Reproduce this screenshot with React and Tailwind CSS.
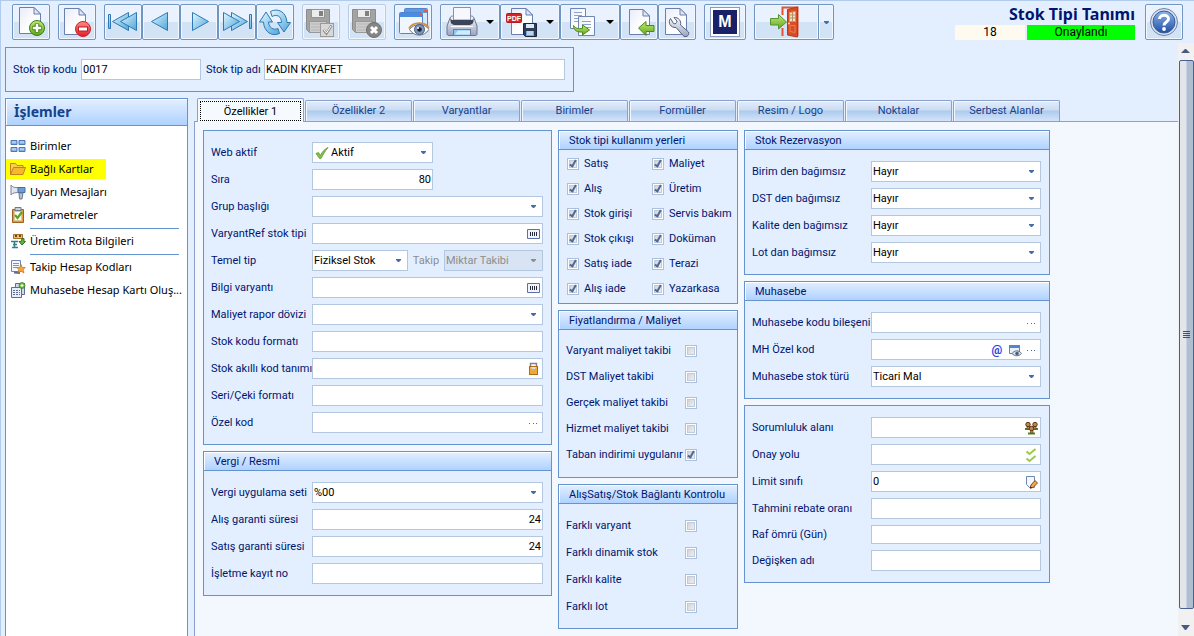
import clsx from "clsx";

/* ---------- toolbar icons ---------- */

function Page({ x = 0, y = 0, w = 22, h = 28 }) {
  return (
    <g transform={`translate(${x} ${y})`}>
      <path
        d={`M.5 .5H${w - 7}L${w - 0.5} 7V${h - 0.5}H.5Z`}
        fill="url(#paper)"
        stroke="#6a7fae"
      />
      <path d={`M${w - 7} .5V7H${w - 0.5}Z`} fill="#dfe6f6" stroke="#6a7fae" />
    </g>
  );
}

function Defs() {
  return (
    <svg width="0" height="0" className="absolute" aria-hidden="true">
      <defs>
        <linearGradient id="paper" x1="0" y1="0" x2="1" y2="1">
          <stop offset="0" stopColor="#e9ecf8" />
          <stop offset=".6" stopColor="#ffffff" />
          <stop offset="1" stopColor="#f0f3fc" />
        </linearGradient>
        <linearGradient id="aqua" x1="0" y1="0" x2="1" y2="1">
          <stop offset="0" stopColor="#e2f8ff" />
          <stop offset="1" stopColor="#4fa5da" />
        </linearGradient>
        <linearGradient id="lime" x1="0" y1="0" x2="0" y2="1">
          <stop offset="0" stopColor="#c2ec70" />
          <stop offset="1" stopColor="#5fa61e" />
        </linearGradient>
        <linearGradient id="steel" x1="0" y1="0" x2="0" y2="1">
          <stop offset="0" stopColor="#fafbfe" />
          <stop offset="1" stopColor="#98a3be" />
        </linearGradient>
        <linearGradient id="red" x1="0" y1="0" x2="0" y2="1">
          <stop offset="0" stopColor="#ff8c86" />
          <stop offset="1" stopColor="#e01c26" />
        </linearGradient>
        <linearGradient id="blue" x1="0" y1="0" x2="0" y2="1">
          <stop offset="0" stopColor="#8db4ea" />
          <stop offset="1" stopColor="#1f4fa5" />
        </linearGradient>
      </defs>
    </svg>
  );
}

function Icon({ w = 32, children }) {
  return (
    <svg width={w} height="32" viewBox={`0 0 ${w} 32`} aria-hidden="true">
      {children}
    </svg>
  );
}

const NewIcon = () => (
  <Icon>
    <Page x={4} y={1} w={22} h={27} />
    <circle cx="22" cy="22" r="7.5" fill="url(#lime)" stroke="#3f7d12" />
    <path d="M22 17.5v9M17.5 22h9" stroke="#3f7d12" strokeWidth="4.5" />
    <path d="M22 18v8M18 22h8" stroke="#fff" strokeWidth="2.5" />
  </Icon>
);

const DeleteIcon = () => (
  <Icon>
    <Page x={3} y={2} w={22} h={27} />
    <circle cx="22" cy="23" r="7.5" fill="url(#red)" stroke="#c8222c" />
    <rect x="17.5" y="21" width="9" height="4" fill="#fff" stroke="#b81c26" />
  </Icon>
);

const FirstIcon = () => (
  <Icon>
    <g fill="url(#aqua)" stroke="#2f78b4">
      <path d="M1.500 8.500h2v14h-2z" />
      <path d="M21.500 6.500v18L5.500 15.500z" />
      <path d="M29.500 6.500v18L13.500 15.500z" />
    </g>
  </Icon>
);

const PrevIcon = () => (
  <Icon>
    <path d="M22.500 6.500v18L6.500 15.500z" fill="url(#aqua)" stroke="#2f78b4" />
  </Icon>
);

const NextIcon = () => (
  <Icon>
    <path d="M9.500 6.500v18L25.500 15.500z" fill="url(#aqua)" stroke="#2f78b4" />
  </Icon>
);

const LastIcon = () => (
  <Icon>
    <g fill="url(#aqua)" stroke="#2f78b4">
      <path d="M28.500 8.500h2v14h-2z" />
      <path d="M10.500 6.500v18L26.500 15.500z" />
      <path d="M2.500 6.500v18L18.500 15.500z" />
    </g>
  </Icon>
);

const RefreshIcon = () => (
  <Icon>
    <g fill="url(#aqua)" stroke="#2f78b4" strokeLinejoin="round">
      <path d="M11.500 5.500C19 1.500 27.500 6 28 16.500h3.500L25 26l-6.500-9.500H22.500C22.500 10 17.500 8 13 10.500Z" />
      <path d="M20.500 27.500C13 31 5 26 4.500 16H.5L7 6l6.500 10H9.500C10 22 14.500 24.500 19 22.500Z" />
    </g>
  </Icon>
);

function Floppy() {
  return (
    <g>
      <path d="M1.500 3.500h23v23h-20l-3-3z" fill="#a3a3a3" stroke="#8c8c8c" />
      <rect x="6.500" y="3.500" width="13" height="8" fill="#ececec" stroke="#949494" />
      <rect x="14" y="5" width="4" height="5" fill="#808080" />
      <rect x="4.500" y="15.500" width="17" height="11" fill="#cdcdcd" stroke="#989898" />
      <path d="M6 18h14M6 21h14M6 24h14" stroke="#b5b5b5" />
    </g>
  );
}

const SaveIcon = () => (
  <Icon>
    <Floppy />
    <rect x="15.500" y="17.500" width="13" height="13" fill="#d8d8d8" stroke="#9a9a9a" />
    <path d="m18.500 24 3 3.500 5-8" fill="none" stroke="#8d8d8d" strokeWidth="2.500" />
    <path d="m19 24 2.500 3 4.500-7" fill="none" stroke="#fff" />
  </Icon>
);

const SaveCloseIcon = () => (
  <Icon>
    <Floppy />
    <circle cx="23" cy="24" r="7.500" fill="#858585" stroke="#707070" />
    <path d="m20 21 6 6m0-6-6 6" stroke="#fff" strokeWidth="3" />
  </Icon>
);

const PreviewIcon = () => (
  <Icon>
    <rect x="7.500" y="2.500" width="23" height="20" rx="1" fill="#d9e9fb" stroke="#4d86cf" />
    <path d="M8 3h22v4H8z" fill="#5d9ae3" />
    <rect x="2.500" y="6.500" width="23" height="21" rx="1" fill="#f1f6fe" stroke="#4d86cf" />
    <path d="M3 7h22v4H3z" fill="#4b8de0" />
    <path d="M22 8h3v2h-3zM27 4h3v2h-3z" fill="#f0583a" />
    <path d="M12.500 23.500C17 17 28 17 32 23.500 27 31 17 31 12.500 23.500Z" fill="#fff" stroke="#6e7486" />
    <path d="M12 22.500C16 15.500 28 15.500 32 22" fill="none" stroke="#d78b3c" strokeWidth="1.800" />
    <circle cx="22.500" cy="23.500" r="5" fill="#7e96b8" stroke="#4d5f7e" />
    <circle cx="22.500" cy="23.500" r="2.300" fill="#1a2339" />
    <circle cx="21" cy="22" r="1" fill="#fff" />
  </Icon>
);

const PrintIcon = () => (
  <Icon>
    <path d="M4 12c1-2 2-2 4-2h16c2 0 3 0 4 2l3 8v8c0 1-1 1.500-2 1.500H3c-1 0-2-.5-2-1.500v-8Z" fill="url(#steel)" stroke="#6a7590" />
    <path d="M4.500 12c-.5 5 1 7 5 7h13c4 0 5.500-2 5-7-1 2.500-2 3-5 3h-13c-3 0-4-.5-5-3Z" fill="#3b4459" />
    <path d="M7.500 1.500h17v12.500h-17z" fill="#f7f8fd" stroke="#8892ac" />
    <path d="M6 14h20v3H6z" fill="#3b4459" />
    <path d="M5 20.500h22" stroke="#fff" />
    <rect x="7.500" y="23.500" width="17" height="6" fill="#8cc9f8" stroke="#6d7c9a" />
    <path d="M12 24.500h12v4H9z" fill="#d0ebff" />
  </Icon>
);

const PdfIcon = () => (
  <Icon>
    <Page x={5} y={2} w={22} h={27} />
    <rect x=".5" y="7.500" width="15" height="9" rx="1" fill="#d8232b" stroke="#b5161e" />
    <text x="8" y="15" textAnchor="middle" fontFamily="Liberation Sans" fontWeight="700" fontSize="7" fill="#fff">
      PDF
    </text>
    <path d="M17.500 17.500h13v13h-11l-2-2z" fill="#2f3c55" stroke="#1c263b" />
    <rect x="20" y="18" width="8" height="4" fill="#dce8f6" />
    <rect x="20" y="25" width="8" height="5" fill="#74a9e6" />
    <path d="M21 26h6M21 28h6" stroke="#fff" />
  </Icon>
);

const CopyIcon = () => (
  <Icon>
    <g stroke="#6f85b3" fill="url(#paper)">
      <path d="M4.500 2.500h15v20h-15z" />
      <path d="M12.500 10.500h16v19h-16z" />
    </g>
    <path d="M8 6.500h8M8 9.500h8M8 12.500h4M8 15.500h4M16 15.500h9M16 18.500h9M20 21.500h5" stroke="#8da3cc" />
    <path d="M7.500 19.500c2 3 5 3.500 9 3v-3.500l7 5-7 5v-3c-5 .5-9-1.500-9-6.500Z" fill="url(#lime)" stroke="#4a8a17" />
  </Icon>
);

const ImportIcon = () => (
  <Icon>
    <Page x={6} y={3} w={21} h={26} />
    <path d="m15.500 22 7.500-6.500v4h8v6h-8v4z" fill="url(#lime)" stroke="#4a8a17" />
  </Icon>
);

const SettingsIcon = () => (
  <Icon>
    <Page x={4} y={2} w={22} h={27} />
    <path
      d="M9.500 12.500c-3 4 0 9.500 5.500 9l7 8c2 2.500 7 .5 5.500-3.500l-8-7c1-4-2-8-6.500-7.500l3 3.500c0 2-1.500 3.500-3.500 2.500Z"
      fill="url(#steel)"
      stroke="#52607e"
      strokeLinejoin="round"
    />
  </Icon>
);

const ExitIcon = () => (
  <Icon w={36}>
    <path d="M13.500 9V1.500h15V30M13.500 30V22" fill="none" stroke="#e7532c" strokeWidth="2" />
    <path d="M1.500 12.500h8v-4l8 7.500-8 7v-4h-8z" fill="url(#lime)" stroke="#5a9138" />
    <path d="m18.500 3.500 10-2.500v30l-10-2z" fill="#d94d26" stroke="#b33a1a" />
    <path d="M20.500 6.500 26.500 5.500v10h-6z" fill="#ece4c4" stroke="#f28a5e" />
    <path d="M23.500 6v9.500M20.500 9h6M20.500 12h6" stroke="#b88f5e" />
    <path d="M21 19.500h5v7l-5-1z" fill="none" stroke="#ef7c54" />
    <circle cx="20" cy="17.500" r="1" fill="#ffe49a" />
  </Icon>
);

const HelpIcon = () => (
  <Icon>
    <circle cx="16" cy="16" r="13.500" fill="#d9e1ee" stroke="#7083a8" />
    <circle cx="16" cy="16" r="11" fill="url(#blue)" stroke="#365e9f" />
    <path d="M11.500 13c.2-5 9-5 9 0 0 3-4.500 3.200-4.500 6.500" fill="none" stroke="#fff" strokeWidth="3" />
    <circle cx="16" cy="23" r="1.900" fill="#fff" />
  </Icon>
);

/* ---------- small icons ---------- */

function Small({ children }) {
  return (
    <svg width="16" height="16" viewBox="0 0 16 16" className="shrink-0" aria-hidden="true">
      {children}
    </svg>
  );
}

const UnitsIcon = () => (
  <Small>
    <g fill="#8db4e6" stroke="#4a78b8">
      <path d="M1 2.500h6v4H1zM9 2.500h6v4H9zM1 9.500h6v4H1zM9 9.500h6v4H9z" />
    </g>
    <path d="M2 4h4M10 4h4M2 11h4M10 11h4" stroke="#c9def6" />
  </Small>
);

const FolderIcon = () => (
  <Small>
    <path d="M.5 13.500v-11h5l1.500 2h6v3" fill="#f9cf52" stroke="#c1831a" />
    <path d="M.5 13.500 3.500 6.500h12l-2.500 7z" fill="#f7b92c" stroke="#c1831a" />
  </Small>
);

const HornIcon = () => (
  <Small>
    <path d="M1 1c2 3 5 2.500 9 2.500v5C6 8.500 3 8.500 1 11Z" fill="#dfe4ee" stroke="#7b8498" />
    <path d="M8 3.500h7v5H8z" fill="#6b9ed4" stroke="#46719f" />
    <path d="M9 9h4l-1 6H9.500z" fill="#b6bfce" stroke="#6f7c92" />
  </Small>
);

const ClipboardIcon = () => (
  <Small>
    <path d="M2.500 2.500h11v13h-11z" fill="#e59a3e" stroke="#a2601c" />
    <path d="M4.500 4.500h7v9h-7z" fill="#fdfcf4" stroke="#d8c79e" />
    <path d="M5 .5h6v3H5z" fill="#c9cfda" stroke="#707a8c" />
    <path d="m5 8 2.500 3L12 5" fill="none" stroke="#5aa422" strokeWidth="2.200" />
  </Small>
);

const RouteIcon = () => (
  <Small>
    <path d="M3.500 1.500h9v4h-9z" fill="#f0c069" stroke="#a66f25" />
    <path d="M5 3h2M9 3h2" stroke="#6b4512" strokeWidth="2" />
    <path d="M12 5.500h2v3h1.500L12 12 9 8.500h2z" fill="#62b23a" stroke="#34781a" />
    <path d="M1 8.500h7M4.500 8.500v6M2 14.500h6M3 11.500h4" stroke="#33808a" strokeWidth="1.500" />
  </Small>
);

const TrackIcon = () => (
  <Small>
    <path d="M1.500 1.500h9v11h-9z" fill="#f4f7fd" stroke="#6f85b3" />
    <path d="M3 4.500h6M3 6.500h6M3 8.500h4" stroke="#7b93c2" />
    <path d="m4 13.500 6 .5" stroke="#59709c" strokeWidth="2" />
    <path d="m11 5.500 1.300 3h3l-2.200 2 .9 3.500-3-1.800-3 1.800.9-3.500-2.200-2h3z" fill="#f5a53a" stroke="#b65f18" strokeWidth=".6" />
  </Small>
);

const CalcIcon = () => (
  <Small>
    <path d="M1.500 5.500h10v10h-10z" fill="#e9eef8" stroke="#5b6f96" />
    <path d="M5.500 1.500h9v11h-3v-7h-6z" fill="#cfd9ec" stroke="#5b6f96" />
    <path d="M3 8.500h2m1 0h2m1 0h1M3 10.500h2m1 0h2m1 0h1M3 12.500h2m1 0h2m1 0h1" stroke="#5b6f96" />
    <circle cx="12" cy="3.500" r="3" fill="#6dba38" stroke="#37781a" strokeWidth=".7" />
    <path d="M12 2v3M10.500 3.500h3" stroke="#fff" />
  </Small>
);

const CheckMark = () => (
  <Small>
    <path d="m2 8.500 2.500-1 2 3C8 7 10.500 4 14 2.500 11 6 9.500 9 7 13.500H5.500Z" fill="#86bf4d" stroke="#5d9a2b" strokeWidth=".8" />
  </Small>
);

const BarcodeIcon = () => (
  <Small>
    <path d="M2.500 3.500h12v9h-12z" fill="#f2f4fd" stroke="#5d6eac" />
    <path d="M5.500 6v4M7.500 6v4M9.500 6v4M11.500 6v4" stroke="#252a38" />
  </Small>
);

const LockIcon = () => (
  <Small>
    <path d="M5.500 6V2.500h6V6" fill="none" stroke="#7b8498" strokeWidth="1.500" />
    <rect x="4.500" y="5.500" width="8" height="8" fill="#f0a936" stroke="#b06c14" />
    <path d="M6 6h5l-1 2H7z" fill="#d8dfec" />
  </Small>
);

const DotsIcon = () => (
  <Small>
    <path d="M4 8h1v1H4zM8 8h1v1H8zM11 8h1v1h-1z" fill="#3f6fa8" />
  </Small>
);

const ViewIcon = () => (
  <Small>
    <path d="M2.500 3.500h10v8h-10z" fill="#eaf1fb" stroke="#5d83b8" />
    <path d="M2 3h11v3H2z" fill="#5487c6" />
    <path d="M5 11.500c2.500-3.500 7-3.500 9.500 0-2.500 3-7 3-9.500 0Z" fill="#dfe6ef" stroke="#5b6c86" />
    <circle cx="10" cy="11.500" r="1.800" fill="#4b5f80" />
  </Small>
);

const PeopleIcon = () => (
  <Small>
    <path d="M2 9h4M11 9h4M5 13.500h7" stroke="#3c8a2c" strokeWidth="2" />
    <g fill="#c08a4c" stroke="#5a3413">
      <path d="M4 6h2.500v3H4zM10.500 6H13v3h-2.500zM7.500 10H10v3H7.500z" strokeWidth=".6" />
      <circle cx="5" cy="4.500" r="2.200" />
      <circle cx="12" cy="4.500" r="2.200" />
      <circle cx="8.500" cy="8.500" r="2.200" />
    </g>
  </Small>
);

const ApprovalIcon = () => (
  <Small>
    <path d="m3.500 4.500 3 2.500 6-5M3.500 11.500l3 2.500 6-5" fill="none" stroke="#9aca48" strokeWidth="2" />
  </Small>
);

const EditIcon = () => (
  <Small>
    <path d="M3.500 2.500h8v11h-5l-3-3z" fill="#f5f8fe" stroke="#6c86b8" />
    <path d="m7 14 1-3 4-4.500 2.500 2.500-4.500 4.500z" fill="#f0a550" stroke="#8a4a18" />
    <path d="m7 14.500.7-2 1.500 1.500z" fill="#222" />
  </Small>
);

const Caret = ({ color = "#3f6fa8" }) => (
  <svg width="5" height="3" viewBox="0 0 5 3" className="shrink-0" aria-hidden="true">
    <path d="M0 0h5v1L3 3H2L0 1z" fill={color} />
  </svg>
);

/* ---------- building blocks ---------- */

const BUTTON =
  "flex h-9 items-center justify-center rounded-xs border bg-linear-to-b from-[#e9f2fe] from-50% to-[#d3e3f6] to-50% shadow-[inset_0_0_0_1px_#f1f7ff]";

function ToolButton({ label, icon: ToolIcon, disabled, menu, className }) {
  return (
    <button
      type="button"
      aria-label={label}
      disabled={disabled}
      className={clsx(
        BUTTON,
        menu ? "w-[60px] gap-1" : "w-[38px]",
        disabled ? "border-[#b9cce4]" : "border-[#7095c1]",
        className,
      )}>
      <ToolIcon />
      {menu && (
        <svg width="8" height="4" viewBox="0 0 8 4" className="ml-1" aria-hidden="true">
          <path d="M0 0h8L4 4z" fill="#000" />
        </svg>
      )}
    </button>
  );
}

function Panel({ title, children, className }) {
  return (
    <section className="border border-[#6593cf] bg-[#e3efff]">
      {title && (
        <h2 className="h-[19px] border-b border-[#6593cf] bg-linear-to-b from-[#e3efff] to-[#afd2ff] pl-2.5 text-[11px] leading-[19px] shadow-[inset_1px_1px_0_#ffffff]">
          {title}
        </h2>
      )}
      <div className={className}>{children}</div>
    </section>
  );
}

function TextBox({ id, value, right, short, icons, className }) {
  return (
    <div
      className={clsx(
        "flex items-center border border-[#b3c7e1] bg-white text-black",
        short ? "h-[19px]" : "h-[21px]",
        className,
      )}>
      <input
        id={id}
        type="text"
        defaultValue={value}
        className={clsx("h-full w-full min-w-0 flex-1 bg-transparent px-px outline-none", right && "text-right")}
      />
      {icons && <span className="flex items-center pr-px">{icons}</span>}
    </div>
  );
}

function SelectBox({ id, value, disabled, icon, className }) {
  return (
    <div
      className={clsx(
        "relative flex h-[21px] items-center border border-[#b3c7e1]",
        disabled ? "bg-[#d8e4f3] text-[#8d8d8d]" : "bg-white text-black",
        icon && "pl-px",
        className,
      )}>
      {icon}
      <select
        id={id}
        disabled={disabled}
        defaultValue={value}
        className="h-full w-full min-w-0 flex-1 appearance-none bg-transparent px-px opacity-100 outline-none">
        <option>{value}</option>
      </select>
      <span className="pointer-events-none absolute right-1.5">
        <Caret color={disabled ? "#8d8d8d" : undefined} />
      </span>
    </div>
  );
}

function Row({ id, label, labelClass, children }) {
  return (
    <div className="flex items-center">
      <label htmlFor={id} className={clsx("shrink-0 whitespace-nowrap", labelClass)}>
        {label}
      </label>
      {children}
    </div>
  );
}

function Check({ id, checked }) {
  return (
    <input
      id={id}
      type="checkbox"
      defaultChecked={checked}
      className="relative size-3 shrink-0 appearance-none border border-[#a9c0de] bg-linear-to-br from-[#c9ced6] to-[#f6f6f6] shadow-[inset_0_0_0_1px_#ffffff,inset_0_0_0_2px_#c5cad2] checked:after:absolute checked:after:top-0 checked:after:left-[3px] checked:after:h-2 checked:after:w-1 checked:after:rotate-30 checked:after:border-r-2 checked:after:border-b-2 checked:after:border-[#4d6a99] checked:after:content-['']"
    />
  );
}

/* ---------- page data ---------- */

const TABS = ["Özellikler 1", "Özellikler 2", "Varyantlar", "Birimler", "Formüller", "Resim / Logo", "Noktalar", "Serbest Alanlar"];

const USAGE = [
  ["Satış", "Maliyet"],
  ["Alış", "Üretim"],
  ["Stok girişi", "Servis bakım"],
  ["Stok çıkışı", "Doküman"],
  ["Satış iade", "Terazi"],
  ["Alış iade", "Yazarkasa"],
];

const PRICING = [
  ["Varyant maliyet takibi", false],
  ["DST Maliyet takibi", false],
  ["Gerçek maliyet takibi", false],
  ["Hizmet maliyet takibi", false],
  ["Taban indirimi uygulanır", true],
];

const LINKS = ["Farklı varyant", "Farklı dinamik stok", "Farklı kalite", "Farklı lot"];

const RESERVATION = ["Birim den bağımsız", "DST den bağımsız", "Kalite den bağımsız", "Lot dan bağımsız"];

function SideLink({ icon: LinkIcon, active, children }) {
  return (
    <a href="#" className={clsx("flex h-5 items-center gap-1 pl-1 whitespace-nowrap", active && "bg-[#ffff00] pr-3")}>
      <LinkIcon />
      {children}
    </a>
  );
}

function Toolbar() {
  return (
    <header className="flex items-start px-[11px] pt-[3px]">
      <div className="flex">
        <ToolButton label="Yeni" icon={NewIcon} />
        <ToolButton label="Sil" icon={DeleteIcon} className="ml-2" />
        <div className="ml-2 flex">
          <ToolButton label="İlk" icon={FirstIcon} />
          <ToolButton label="Önceki" icon={PrevIcon} />
          <ToolButton label="Sonraki" icon={NextIcon} />
          <ToolButton label="Son" icon={LastIcon} />
          <ToolButton label="Yenile" icon={RefreshIcon} />
        </div>
        <ToolButton label="Kaydet" icon={SaveIcon} disabled className="ml-2" />
        <ToolButton label="Kaydet ve kapat" icon={SaveCloseIcon} disabled className="ml-2" />
        <ToolButton label="Önizle" icon={PreviewIcon} className="ml-2" />
        <div className="ml-2 flex">
          <ToolButton label="Yazdır" icon={PrintIcon} menu />
          <ToolButton label="PDF kaydet" icon={PdfIcon} menu />
          <ToolButton label="Kopyala" icon={CopyIcon} menu />
          <ToolButton label="İçe aktar" icon={ImportIcon} />
          <ToolButton label="Ayarlar" icon={SettingsIcon} />
        </div>
        <button type="button" className={clsx(BUTTON, "ml-2 w-[42px] border-[#7095c1]")}>
          <span className="flex size-[30px] items-center justify-center border border-[#8a9cc0] bg-white">
            <span className="flex size-6 items-center justify-center bg-[#1a2167] font-['Liberation_Sans'] text-base leading-none font-bold text-white">
              M
            </span>
          </span>
        </button>
        <button
          type="button"
          aria-label="Çıkış"
          className={clsx(BUTTON, "ml-2 w-16 rounded-r-none border-r-0 border-[#7095c1]")}>
          <ExitIcon />
        </button>
        <button
          type="button"
          aria-label="Çıkış seçenekleri"
          className={clsx(BUTTON, "w-4 rounded-l-none border-[#7095c1]")}>
          <Caret />
        </button>
      </div>
      <div className="ml-auto flex flex-col items-end">
        <h1 className="font-['Noto_Sans'] text-base leading-[21px] font-bold text-[#00156e]">Stok Tipi Tanımı</h1>
        <div className="flex gap-0.5 text-center text-xs leading-[15px] text-black">
          <span className="w-[70px] bg-[#fffaf0]">18</span>
          <span className="w-27 bg-[#00ff00]">Onaylandı</span>
        </div>
      </div>
      <button type="button" aria-label="Yardım" className={clsx(BUTTON, "ml-2.5 w-[38px] border-[#7095c1]")}>
        <HelpIcon />
      </button>
    </header>
  );
}

function Sidebar() {
  return (
    <aside className="w-[183px] shrink-0 border border-b-0 border-[#6593cf] bg-white font-['Noto_Sans',sans-serif]">
      <h2 className="h-[27px] border-b border-[#6593cf] bg-linear-to-b from-[#e3efff] to-[#afd2ff] pl-2 text-sm leading-[25px] font-bold text-[#15428b] shadow-[inset_1px_1px_0_#ffffff]">
        İşlemler
      </h2>
      <nav className="flex flex-col items-start gap-[3px] pt-[10px] text-[11px] text-black">
        <SideLink icon={UnitsIcon}>Birimler</SideLink>
        <SideLink icon={FolderIcon} active>
          Bağlı Kartlar
        </SideLink>
        <SideLink icon={HornIcon}>Uyarı Mesajları</SideLink>
        <SideLink icon={ClipboardIcon}>Parametreler</SideLink>
        <hr className="-mb-px ml-6 w-[149px] border-[#6593cf]" />
        <SideLink icon={RouteIcon}>Üretim Rota Bilgileri</SideLink>
        <hr className="-mb-px ml-6 w-[149px] border-[#6593cf]" />
        <SideLink icon={TrackIcon}>Takip Hesap Kodları</SideLink>
        <SideLink icon={CalcIcon}>Muhasebe Hesap Kartı Oluş...</SideLink>
      </nav>
    </aside>
  );
}

function TabStrip() {
  return (
    <div role="tablist" className="flex items-end pl-[3px]">
      {TABS.map((tab, i) =>
        i === 0 ? (
          <button
            key={tab}
            type="button"
            role="tab"
            aria-selected="true"
            className="relative z-10 -mb-px h-6 w-[107px] rounded-t-xs border border-b-0 border-[#8ba0cc] bg-[#f5faff] p-0.5 text-black">
            <span className="block h-5 border border-dotted border-black leading-[19px]">{tab}</span>
          </button>
        ) : (
          <button
            key={tab}
            type="button"
            role="tab"
            aria-selected="false"
            className="ml-px h-[21px] w-[107px] rounded-t-xs border border-b-0 border-[#8ba0cc] bg-[linear-gradient(to_bottom,#e3edfa,#cbdcf3_45%,#adcbee_50%,#d3e4f9)] text-[#15428b] shadow-[inset_1px_1px_0_#f1f7ff]">
            {tab}
          </button>
        ),
      )}
    </div>
  );
}

const L = "w-[101px]";
const R = "w-[119px]";
const FORM = "flex flex-col gap-1.5 py-[11px] pr-2 pl-[7px]";

function GeneralColumn() {
  return (
    <div className="flex w-[349px] flex-col gap-1.5">
      <Panel className={FORM}>
        <Row id="web" label="Web aktif" labelClass={L}>
          <SelectBox id="web" value="Aktif" icon={<CheckMark />} className="w-[121px]" />
        </Row>
        <Row id="sira" label="Sıra" labelClass={L}>
          <TextBox id="sira" value="80" right className="w-[121px]" />
        </Row>
        <Row id="grup" label="Grup başlığı" labelClass={L}>
          <SelectBox id="grup" className="flex-1" />
        </Row>
        <Row id="varyantref" label="VaryantRef stok tipi" labelClass={L}>
          <TextBox id="varyantref" icons={<BarcodeIcon />} className="flex-1" />
        </Row>
        <Row id="temel" label="Temel tip" labelClass={L}>
          <SelectBox id="temel" value="Fiziksel Stok" className="w-24" />
          <label htmlFor="takip" className="flex-1 text-center text-[#8d8d8d]">
            Takip
          </label>
          <SelectBox id="takip" value="Miktar Takibi" disabled className="w-[99px]" />
        </Row>
        <Row id="bilgi" label="Bilgi varyantı" labelClass={L}>
          <TextBox id="bilgi" icons={<BarcodeIcon />} className="flex-1" />
        </Row>
        <Row id="doviz" label="Maliyet rapor dövizi" labelClass={L}>
          <SelectBox id="doviz" className="flex-1" />
        </Row>
        <Row id="format" label="Stok kodu formatı" labelClass={L}>
          <TextBox id="format" className="flex-1" />
        </Row>
        <Row id="akilli" label="Stok akıllı kod tanımı" labelClass={L}>
          <TextBox id="akilli" icons={<LockIcon />} className="flex-1" />
        </Row>
        <Row id="seri" label="Seri/Çeki formatı" labelClass={L}>
          <TextBox id="seri" className="flex-1" />
        </Row>
        <Row id="ozel" label="Özel kod" labelClass={L}>
          <TextBox id="ozel" icons={<DotsIcon />} className="flex-1" />
        </Row>
      </Panel>
      <Panel title="Vergi / Resmi" className={FORM}>
        <Row id="vergi" label="Vergi uygulama seti" labelClass={L}>
          <SelectBox id="vergi" value="%00" className="flex-1" />
        </Row>
        <Row id="alisgaranti" label="Alış garanti süresi" labelClass={L}>
          <TextBox id="alisgaranti" value="24" right className="flex-1" />
        </Row>
        <Row id="satisgaranti" label="Satış garanti süresi" labelClass={L}>
          <TextBox id="satisgaranti" value="24" right className="flex-1" />
        </Row>
        <Row id="isletme" label="İşletme kayıt no" labelClass={L}>
          <TextBox id="isletme" className="flex-1" />
        </Row>
      </Panel>
    </div>
  );
}

function UsageColumn() {
  return (
    <div className="flex w-[180px] flex-col gap-1.5">
      <Panel title="Stok tipi kullanım yerleri" className="pt-px pb-0.5 pl-2">
        {USAGE.map((pair) => (
          <div key={pair[0]} className="flex h-[25px] items-center">
            {pair.map((name) => (
              <label key={name} className="flex w-[85px] items-center gap-[5px] whitespace-nowrap">
                <Check checked />
                {name}
              </label>
            ))}
          </div>
        ))}
      </Panel>
      <Panel title="Fiyatlandırma / Maliyet" className="pt-2 pb-[9px] pl-[7px]">
        {PRICING.map(([name, on]) => (
          <label key={name} className="flex h-[26px] items-center whitespace-nowrap">
            <span className="w-[119px]">{name}</span>
            <Check checked={on} />
          </label>
        ))}
      </Panel>
      <Panel title="AlışSatış/Stok Bağlantı Kontrolu" className="py-2 pl-[7px]">
        {LINKS.map((name) => (
          <label key={name} className="flex h-[27px] items-center whitespace-nowrap">
            <span className="w-[119px]">{name}</span>
            <Check />
          </label>
        ))}
      </Panel>
    </div>
  );
}

function AccountingColumn() {
  return (
    <div className="flex w-[306px] flex-col gap-1.5">
      <Panel title="Stok Rezervasyon" className={FORM}>
        {RESERVATION.map((name) => (
          <Row key={name} id={name} label={name} labelClass={R}>
            <SelectBox id={name} value="Hayır" className="flex-1" />
          </Row>
        ))}
      </Panel>
      <Panel title="Muhasebe" className={FORM}>
        <Row id="mkod" label="Muhasebe kodu bileşeni" labelClass={R}>
          <TextBox id="mkod" icons={<DotsIcon />} className="flex-1" />
        </Row>
        <Row id="mhozel" label="MH Özel kod" labelClass={R}>
          <TextBox
            id="mhozel"
            icons={
              <>
                <span className="w-5 text-center text-xs leading-4 font-bold text-[#1f3fe0]">@</span>
                <ViewIcon />
                <DotsIcon />
              </>
            }
            className="flex-1"
          />
        </Row>
        <Row id="mtur" label="Muhasebe stok türü" labelClass={R}>
          <SelectBox id="mtur" value="Ticari Mal" className="flex-1" />
        </Row>
      </Panel>
      <Panel className={FORM}>
        <Row id="sorumluluk" label="Sorumluluk alanı" labelClass={R}>
          <TextBox id="sorumluluk" icons={<PeopleIcon />} className="flex-1" />
        </Row>
        <Row id="onay" label="Onay yolu" labelClass={R}>
          <TextBox id="onay" icons={<ApprovalIcon />} className="flex-1" />
        </Row>
        <Row id="limit" label="Limit sınıfı" labelClass={R}>
          <TextBox id="limit" value="0" icons={<EditIcon />} className="flex-1" />
        </Row>
        <Row id="rebate" label="Tahmini rebate oranı" labelClass={R}>
          <TextBox id="rebate" className="flex-1" />
        </Row>
        <Row id="raf" label="Raf ömrü (Gün)" labelClass={R}>
          <TextBox id="raf" short className="flex-1" />
        </Row>
        <Row id="degisken" label="Değişken adı" labelClass={R}>
          <TextBox id="degisken" className="flex-1" />
        </Row>
      </Panel>
    </div>
  );
}

function ScrollBar() {
  return (
    <div className="flex w-4 shrink-0 flex-col items-center bg-[#f1f1f1]" aria-hidden="true">
      <svg width="16" height="17" viewBox="0 0 16 17">
        <path d="M3 10h9L8 6H7z" fill="#4a5a80" />
      </svg>
      <div className="flex w-[15px] flex-1 flex-col items-center justify-center gap-px rounded-xs border border-[#4b5f92] bg-linear-to-r from-[#e2e6ea] from-45% to-[#aebfd4] to-55%">
        <span className="h-px w-[7px] bg-[#3f4f75]" />
        <span className="h-px w-[7px] bg-[#3f4f75]" />
        <span className="h-px w-[7px] bg-[#3f4f75]" />
        <span className="h-px w-[7px] bg-[#3f4f75]" />
      </div>
      <svg width="16" height="27" viewBox="0 0 16 27">
        <path d="M3 16h9l-4 5H7z" fill="#4a5a80" />
      </svg>
    </div>
  );
}

export default function App() {
  return (
    <div className="flex min-h-screen flex-col border-t border-l border-[#b1cbed] bg-[#e3efff] font-[Roboto,sans-serif] text-[11px] leading-4 text-[#00156e]">
      <Defs />
      <Toolbar />
      <div className="mt-[3px] flex flex-1">
        <div className="flex min-w-0 flex-1 flex-col pl-1">
          <div className="mt-1 flex h-[45px] w-[569px] items-center border border-[#6593cf] pl-[7px]">
            <label htmlFor="kod" className="w-[68px]">
              Stok tip kodu
            </label>
            <TextBox id="kod" value="0017" className="w-[120px]" />
            <label htmlFor="ad" className="ml-[5px] w-[58px]">
              Stok tip adı
            </label>
            <TextBox id="ad" value="KADIN KIYAFET" className="w-[301px]" />
          </div>
          <div className="mt-1.5 flex flex-1">
            <Sidebar />
            <main className="ml-1.5 flex min-w-0 flex-1 flex-col">
              <TabStrip />
              <div className="flex flex-1 items-start gap-1.5 border-t border-l border-[#8ba0cc] bg-[#f3f8ff] pt-2 pb-[7px] pl-2">
                <GeneralColumn />
                <UsageColumn />
                <AccountingColumn />
              </div>
            </main>
          </div>
        </div>
        <ScrollBar />
      </div>
    </div>
  );
}
